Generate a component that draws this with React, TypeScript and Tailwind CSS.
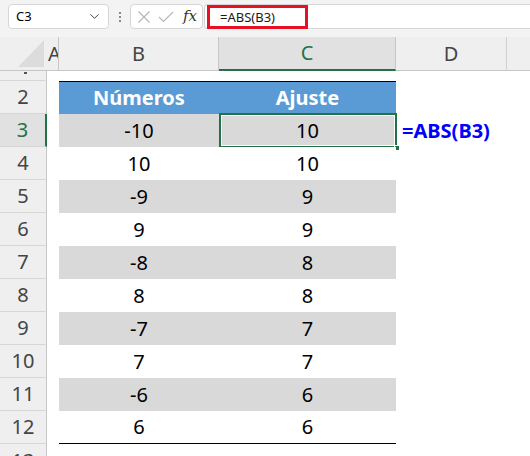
import React from "react";
import { ChevronDown } from "lucide-react";

const rows = [
  { n: 3, b: "-10", c: "10" },
  { n: 4, b: "10", c: "10" },
  { n: 5, b: "-9", c: "9" },
  { n: 6, b: "9", c: "9" },
  { n: 7, b: "-8", c: "8" },
  { n: 8, b: "8", c: "8" },
  { n: 9, b: "-7", c: "7" },
  { n: 10, b: "7", c: "7" },
  { n: 11, b: "-6", c: "6" },
  { n: 12, b: "6", c: "6" },
];

export default function App() {
  return (
    <div
      className="w-[530px] h-[456px] overflow-hidden bg-white text-black"
      style={{ fontFamily: '"Noto Sans", "Open Sans", sans-serif' }}
    >
      {/* formula bar */}
      <div className="h-[37px] bg-[#f3f3f3] flex items-start pt-[4px] pl-[8px]">
        <div className="w-[101px] h-[25px] bg-white border border-[#d6d6d6] rounded-[4px] flex items-center pl-[7px] pr-[6px] justify-between">
          <span className="text-[13px] leading-none text-black">C3</span>
          <ChevronDown size={15} strokeWidth={1.6} color="#444" />
        </div>
        <div className="w-[21px] h-[25px] flex flex-col items-center justify-center gap-[2px]">
          <div className="w-[2px] h-[2px] bg-[#8a8a8a]" />
          <div className="w-[2px] h-[2px] bg-[#8a8a8a]" />
          <div className="w-[2px] h-[2px] bg-[#8a8a8a]" />
        </div>
        <div className="w-[73px] h-[25px] bg-white border border-[#d6d6d6] rounded-[4px] flex items-center pl-[6px]">
          <svg width="14" height="14" viewBox="0 0 14 14" className="mr-[7px]">
            <path d="M1.5 1.5 L12.5 12.5 M12.5 1.5 L1.5 12.5" stroke="#b8b8b8" strokeWidth="1.2" fill="none" />
          </svg>
          <svg width="16" height="14" viewBox="0 0 16 14" className="mr-[9px]">
            <path d="M1 7 L5.5 11.5 L15 2" stroke="#b8b8b8" strokeWidth="1.2" fill="none" />
          </svg>
          <span
            className="text-[15px] leading-none italic text-[#333]"
            style={{ fontFamily: '"DejaVu Serif", "Liberation Serif", serif' }}
          >
            fx
          </span>
        </div>
        <div className="flex-1 h-[25px] bg-white border border-[#d6d6d6] border-r-0 rounded-l-[4px] relative ml-[1px]">
          <div className="absolute left-[2px] top-0 w-[101px] h-[24px] border-[3px] border-[#e81123] flex items-center pl-[10px]">
            <span className="text-[13px] leading-none text-[#1a1a1a]">=ABS(B3)</span>
          </div>
        </div>
      </div>

      {/* column headers */}
      <div className="h-[34px] flex bg-[#efefef] text-[20px] text-[#444]">
        <div className="w-[47px] h-full border-b border-[#c6c6c6] relative">
          <svg width="47" height="33" viewBox="0 0 47 33" className="absolute left-0 top-0">
            <polygon points="44,3 44,30 18,30" fill="#dcdcdc" />
          </svg>
        </div>
        <div className="w-[12px] h-full border-b border-r border-[#c6c6c6] overflow-hidden flex items-center">
          <span className="ml-[1px]">A</span>
        </div>
        <div className="w-[160px] h-full border-b border-r border-[#c6c6c6] flex items-center justify-center">B</div>
        <div className="w-[177px] h-full bg-[#e1e1e1] border-b-2 border-[#217346] border-r border-r-[#c6c6c6] flex items-center justify-center text-[#217346]">
          C
        </div>
        <div className="w-[111px] h-full border-b border-r border-[#d0d0d0] border-b-[#c6c6c6] flex items-center justify-center">D</div>
        <div className="flex-1 h-full border-b border-[#c6c6c6]" />
      </div>

      {/* row 1 (tiny) */}
      <div className="h-[10px] flex">
        <div className="w-[47px] h-full bg-[#efefef] border-r border-b border-[#c6c6c6] border-b-[#d6d6d6] relative">
          <div className="absolute left-[24px] top-[1px] w-[3px] h-[2px] bg-[#555]" />
        </div>
        <div className="flex-1" />
      </div>

      {/* row 2 header */}
      <div className="h-[33px] flex">
        <div className="w-[47px] h-full bg-[#efefef] border-r border-b border-[#c6c6c6] border-b-[#d6d6d6] flex items-center justify-center text-[20px] text-[#444]">
          2
        </div>
        <div className="w-[12px]" />
        <div className="w-[160px] h-full bg-[#5b9bd5] border-t border-black flex items-center justify-center text-[20px] font-bold text-white">
          Números
        </div>
        <div className="w-[177px] h-full bg-[#5b9bd5] border-t border-black flex items-center justify-center text-[20px] font-bold text-white">
          Ajuste
        </div>
        <div className="flex-1" />
      </div>

      {rows.map((r) => {
        const gray = r.n % 2 === 1;
        const sel = r.n === 3;
        const last = r.n === 12;
        return (
          <div key={r.n} className="h-[33px] flex">
            <div
              className={
                sel
                  ? "w-[47px] h-full bg-[#e1e1e1] border-r-2 border-r-[#217346] border-b border-b-[#d6d6d6] flex items-center justify-center text-[20px] text-[#217346]"
                  : "w-[47px] h-full bg-[#efefef] border-r border-r-[#c6c6c6] border-b border-b-[#d6d6d6] flex items-center justify-center text-[20px] text-[#444]"
              }
            >
              {r.n}
            </div>
            <div className="w-[12px]" />
            <div
              className={
                (gray ? "bg-[#d9d9d9] " : "bg-white ") +
                (last ? "border-b border-black " : "") +
                "w-[160px] h-full flex items-center justify-center text-[20px] text-black"
              }
            >
              {r.b}
            </div>
            <div
              className={
                (gray ? "bg-[#d9d9d9] " : "bg-white ") +
                (last ? "border-b border-black " : "") +
                "w-[177px] h-full flex items-center justify-center text-[20px] text-black relative"
              }
            >
              {r.c}
              {sel && (
                <div className="absolute left-0 right-[-1px] top-[-1px] bottom-[-1px] border-2 border-[#217346] shadow-[inset_0_0_0_1px_white]">
                  <div className="absolute right-[-5px] bottom-[-5px] w-[6px] h-[6px] bg-[#217346] border border-white" />
                </div>
              )}
            </div>
            <div className="w-[111px] h-full flex items-center pl-[6px]">
              {sel && (
                <span className="text-[20px] font-bold text-[#0000ff] whitespace-nowrap">=ABS(B3)</span>
              )}
            </div>
            <div className="flex-1" />
          </div>
        );
      })}

      {/* row 13 partial */}
      <div className="h-[33px] flex">
        <div className="w-[47px] h-full bg-[#efefef] border-r border-[#c6c6c6] flex items-center justify-center text-[20px] text-[#444]">
          13
        </div>
        <div className="flex-1" />
      </div>
    </div>
  );
}
